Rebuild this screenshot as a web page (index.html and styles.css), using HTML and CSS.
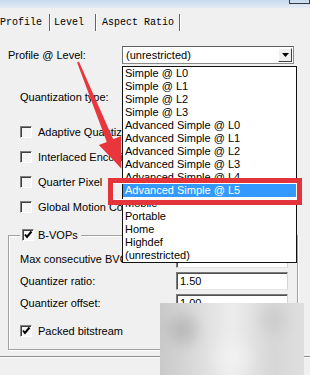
FILE: index.html
```html
<!DOCTYPE html>
<html lang="en">
  <head>
    <meta charset="UTF-8" />
    <link rel="stylesheet" href="styles.css">
  </head>
  <body>
    <div class="window">
      <!-- 标题栏 -->
      <div class="titlebar"><span class="tb-btn"></span></div>

      <!-- 选项卡 -->
      <div class="tabs">
        <span class="tab tab-profile">Profile</span>
        <span class="tab tab-level">Level</span>
        <span class="tab tab-aspect">Aspect Ratio</span>
      </div>

      <div class="panel">
        <div class="field">
          <span class="label label-wide">Profile @ Level:</span>
          <div class="combo">
            <span class="combo-text">(unrestricted)</span>
            <span class="combo-btn">
              <svg width="7" height="4" viewBox="0 0 7 4"><path d="M0 0H7L3.5 4Z" fill="#000"/></svg>
            </span>
          </div>
        </div>

        <div class="field field-quant">
          <span class="label label-quant">Quantization type:</span>
          <div class="combo"></div>
        </div>

        <div class="checks">
          <label class="check"><span class="box"></span>Adaptive Quantization</label>
          <label class="check"><span class="box"></span>Interlaced Encoding</label>
          <label class="check"><span class="box"></span>Quarter Pixel</label>
          <label class="check"><span class="box"></span>Global Motion Compensation</label>
        </div>

        <!-- B-VOPs 分组框 -->
        <div class="group">
          <div class="group-title">
            <span class="box">
              <svg width="10" height="10" viewBox="0 0 10 10"><path d="M2 4.5L4 7L8.5 1.5" fill="none" stroke="#000" stroke-width="2"/></svg>
            </span>
            B-VOPs
          </div>
          <div class="group-rows">
            <div class="field field-num">
              <span class="label label-num">Max consecutive BVOPs:</span>
              <div class="input"></div>
            </div>
            <div class="field field-num">
              <span class="label label-num">Quantizer ratio:</span>
              <div class="input">1.50</div>
            </div>
            <div class="field field-num">
              <span class="label label-num">Quantizer offset:</span>
              <div class="input">1.00</div>
            </div>
            <label class="check check-packed">
              <span class="box">
                <svg width="10" height="10" viewBox="0 0 10 10"><path d="M2 4.5L4 7L8.5 1.5" fill="none" stroke="#000" stroke-width="2"/></svg>
              </span>
              Packed bitstream
            </label>
          </div>
        </div>
      </div>
      <div class="panel-edge"></div>

      <!-- 展开的下拉列表 -->
      <div class="dropdown">
        <div class="item">Simple @ L0</div>
        <div class="item">Simple @ L1</div>
        <div class="item">Simple @ L2</div>
        <div class="item">Simple @ L3</div>
        <div class="item">Advanced Simple @ L0</div>
        <div class="item">Advanced Simple @ L1</div>
        <div class="item">Advanced Simple @ L2</div>
        <div class="item">Advanced Simple @ L3</div>
        <div class="item">Advanced Simple @ L4</div>
        <div class="item item-on">Advanced Simple @ L5</div>
        <div class="item">Mobile</div>
        <div class="item">Portable</div>
        <div class="item">Home</div>
        <div class="item">Highdef</div>
        <div class="item">(unrestricted)</div>
      </div>

      <!-- 红色标注框和箭头 -->
      <div class="mark"></div>
      <svg class="arrow" width="310" height="375" viewBox="0 0 310 375">
        <polygon fill="#e8363c" points="78.9,61.6 113.2,139.3 121.1,136.1 121.3,168.4 98.9,145.1 106.8,141.9 77.1,62.4"/>
      </svg>

      <!-- 右下角模糊水印 -->
      <div class="blur">
        <div class="blur-inner"></div>
      </div>
    </div>
  </body>
</html>
```

FILE: styles.css
```css
* {
  margin: 0;
  padding: 0;
  box-sizing: border-box;
}
body {
  background: #f0f0f0;
  font-family: "Liberation Sans", Arial, sans-serif;
  font-size: 11px;
  color: #000;
}
.window {
  position: relative;
  width: 310px;
  height: 375px;
  overflow: hidden;
}

/* 标题栏 */
.titlebar {
  height: 8px;
  display: flex;
  justify-content: flex-end;
  background: linear-gradient(#c6d9ee, #e4ecf5);
}
.tb-btn {
  width: 21px;
  height: 4px;
  border: 1px solid #3a3a3a;
  border-top: 0;
}

/* 选项卡 */
.tabs {
  display: flex;
  margin-top: 6px;
  height: 17px;
  font-family: "Liberation Mono", "Courier New", monospace;
  font-size: 10px;
  line-height: 17px;
}
.tab {
  border-right: 1px solid #666;
  box-shadow: 1px 0 #fff;
  white-space: nowrap;
}
.tab-profile {
  width: 50px;
}
.tab-level {
  width: 46px;
  padding-left: 4px;
}
.tab-aspect {
  width: 84px;
  padding-left: 6px;
}

/* 面板 */
.panel {
  padding: 15px 0 6px 8px;
}
.field {
  display: flex;
  align-items: center;
  height: 18px;
}
.label {
  white-space: nowrap;
}
.label-wide {
  width: 114px;
}
.field-quant {
  margin-top: 24px;
  padding-left: 12px;
}
.label-quant {
  width: 102px;
}
.combo {
  width: 172px;
  height: 18px;
  display: flex;
  align-items: center;
  justify-content: space-between;
  background: #fff;
  border: 1px solid #8a8a8a;
  border-top-color: #5e5e5e;
  border-left-color: #6e6e6e;
}
.combo-text {
  padding-left: 3px;
}
.combo-btn {
  width: 14px;
  height: 14px;
  margin-right: 1px;
  display: flex;
  align-items: center;
  justify-content: center;
  background: #f0f0f0;
  border: 1px solid;
  border-color: #fff #404040 #404040 #fff;
}

/* 复选框 */
.checks {
  margin-top: 13px;
}
.check {
  display: flex;
  align-items: center;
  height: 25px;
  padding-left: 12px;
  white-space: nowrap;
}
.box {
  width: 12px;
  height: 12px;
  margin-right: 6px;
  flex-shrink: 0;
  display: flex;
  align-items: center;
  justify-content: center;
  background: #f5f5f5;
  border: 1px solid;
  border-color: #808080 #fff #fff #808080;
  box-shadow: inset 1px 1px #404040;
}

/* 分组框 */
.group {
  width: 290px;
  height: 115px;
  margin-top: 16px;
  border: 1px solid #a0a0a0;
  box-shadow: inset 1px 1px #fff, 1px 1px #fff;
}
.group-title {
  display: flex;
  align-items: center;
  width: fit-content;
  height: 14px;
  margin: -8px 0 0 11px;
  padding: 0 3px 0 2px;
  background: #f0f0f0;
}
.group-title .box {
  margin-right: 4px;
}
.group-rows {
  padding: 8px 0 0 11px;
}
.field-num {
  margin-bottom: 4px;
}
.label-num {
  width: 156px;
}
.input {
  width: 112px;
  height: 18px;
  padding-left: 3px;
  line-height: 16px;
  background: #fff;
  border: 1px solid;
  border-color: #7a7a7a #d4d4d4 #e4e4e4 #7a7a7a;
  box-shadow: inset 1px 1px #505050;
}
.check-packed {
  height: 14px;
  margin-top: 12px;
  padding-left: 0;
}
.panel-edge {
  height: 2px;
  border-top: 1px solid #8c8c8c;
  border-bottom: 1px solid #fff;
}

/* 下拉列表 */
.dropdown {
  position: absolute;
  left: 122px;
  top: 66px;
  width: 175px;
  height: 197px;
  background: #fff;
  border: 1px solid #111;
}
.item {
  height: 13px;
  line-height: 13px;
  padding-left: 2px;
  white-space: nowrap;
}
.item-on {
  background: #3399ff;
  color: #fff;
}

/* 标注 */
.mark {
  position: absolute;
  left: 108px;
  top: 178px;
  width: 194px;
  height: 27px;
  border: 5px solid #e3343b;
  box-shadow: inset 0 0 0 1px #fff;
}
.arrow {
  position: absolute;
  left: 0;
  top: 0;
}

/* 水印 */
.blur {
  position: absolute;
  left: 160px;
  top: 303px;
  width: 144px;
  height: 72px;
  overflow: hidden;
  background: #dedede;
}
.blur-inner {
  position: absolute;
  left: -10px;
  top: -10px;
  right: -10px;
  bottom: -10px;
  filter: blur(5px);
  background:
    radial-gradient(circle at 20% 40%, #b4b4b4 0, transparent 22px),
    radial-gradient(circle at 75% 30%, #cacaca 0, transparent 20px),
    radial-gradient(circle at 50% 70%, #f2f2f2 0, transparent 26px),
    linear-gradient(90deg, #c4c4c4 0%, #d8d8d8 25%, #ededed 50%, #d6d6d6 75%, #e2e2e2 100%);
}
```
